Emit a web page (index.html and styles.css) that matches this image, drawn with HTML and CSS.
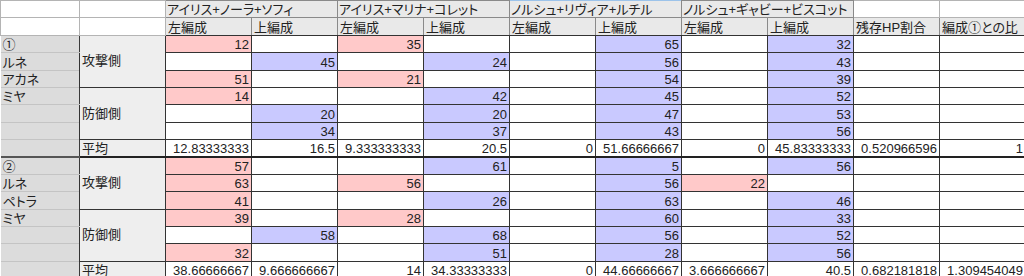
FILE: index.html
```html
<!DOCTYPE html>
<html lang="ja">
<head>
<meta charset="utf-8">
<title>編成比較</title>
<link rel="stylesheet" href="styles.css">
</head>
<body>
<table class="sheet">
  <colgroup>
    <col class="col-a"><col class="col-b">
    <col class="col-n"><col class="col-n"><col class="col-n"><col class="col-n"><col class="col-n">
    <col class="col-n"><col class="col-n"><col class="col-n"><col class="col-n"><col class="col-n">
  </colgroup>
  <tr class="r1">
    <td class="hb"></td><td class="hb"></td>
    <td class="grp" colspan="2">アイリス+ノーラ+ソフィ</td>
    <td class="grp" colspan="2">アイリス+マリナ+コレット</td>
    <td class="grp sel" colspan="2">ノルシュ+リヴィア+ルチル</td>
    <td class="grp" colspan="2">ノルシュ+ギャビー+ビスコット</td>
    <td class="hb"></td><td class="hb"></td>
  </tr>
  <tr class="r2">
    <td class="hb"></td><td class="hb"></td>
    <td class="sub">左編成</td><td class="sub">上編成</td>
    <td class="sub">左編成</td><td class="sub">上編成</td>
    <td class="sub">左編成</td><td class="sub">上編成</td>
    <td class="sub">左編成</td><td class="sub">上編成</td>
    <td class="sub">残存HP割合</td><td class="sub">編成①との比</td>
  </tr>

  <tr>
    <td class="nm">①</td><td class="side" rowspan="3">攻撃側</td>
    <td class="v p">12</td><td class="v"></td><td class="v p">35</td><td class="v"></td><td class="v"></td><td class="v b">65</td><td class="v"></td><td class="v b">32</td><td class="v"></td><td class="v"></td>
  </tr>
  <tr>
    <td class="nm">ルネ</td>
    <td class="v"></td><td class="v b">45</td><td class="v"></td><td class="v b">24</td><td class="v"></td><td class="v b">56</td><td class="v"></td><td class="v b">43</td><td class="v"></td><td class="v"></td>
  </tr>
  <tr>
    <td class="nm">アカネ</td>
    <td class="v p">51</td><td class="v"></td><td class="v p">21</td><td class="v"></td><td class="v"></td><td class="v b">54</td><td class="v"></td><td class="v b">39</td><td class="v"></td><td class="v"></td>
  </tr>
  <tr>
    <td class="nm">ミヤ</td><td class="side" rowspan="3">防御側</td>
    <td class="v p">14</td><td class="v"></td><td class="v"></td><td class="v b">42</td><td class="v"></td><td class="v b">45</td><td class="v"></td><td class="v b">52</td><td class="v"></td><td class="v"></td>
  </tr>
  <tr>
    <td class="nm"></td>
    <td class="v"></td><td class="v b">20</td><td class="v"></td><td class="v b">20</td><td class="v"></td><td class="v b">47</td><td class="v"></td><td class="v b">53</td><td class="v"></td><td class="v"></td>
  </tr>
  <tr>
    <td class="nm"></td>
    <td class="v"></td><td class="v b">34</td><td class="v"></td><td class="v b">37</td><td class="v"></td><td class="v b">43</td><td class="v"></td><td class="v b">56</td><td class="v"></td><td class="v"></td>
  </tr>
  <tr class="avg">
    <td class="nm"></td><td class="side">平均</td>
    <td class="v">12.83333333</td><td class="v">16.5</td><td class="v">9.333333333</td><td class="v">20.5</td><td class="v">0</td><td class="v">51.66666667</td><td class="v">0</td><td class="v">45.83333333</td><td class="v">0.520966596</td><td class="v">1</td>
  </tr>

  <tr>
    <td class="nm">②</td><td class="side" rowspan="3">攻撃側</td>
    <td class="v p">57</td><td class="v"></td><td class="v"></td><td class="v b">61</td><td class="v"></td><td class="v b">5</td><td class="v"></td><td class="v b">56</td><td class="v"></td><td class="v"></td>
  </tr>
  <tr>
    <td class="nm">ルネ</td>
    <td class="v p">63</td><td class="v"></td><td class="v p">56</td><td class="v"></td><td class="v"></td><td class="v b">56</td><td class="v p">22</td><td class="v"></td><td class="v"></td><td class="v"></td>
  </tr>
  <tr>
    <td class="nm">ペトラ</td>
    <td class="v p">41</td><td class="v"></td><td class="v"></td><td class="v b">26</td><td class="v"></td><td class="v b">63</td><td class="v"></td><td class="v b">46</td><td class="v"></td><td class="v"></td>
  </tr>
  <tr>
    <td class="nm">ミヤ</td><td class="side" rowspan="3">防御側</td>
    <td class="v p">39</td><td class="v"></td><td class="v p">28</td><td class="v"></td><td class="v"></td><td class="v b">60</td><td class="v"></td><td class="v b">33</td><td class="v"></td><td class="v"></td>
  </tr>
  <tr>
    <td class="nm"></td>
    <td class="v"></td><td class="v b">58</td><td class="v"></td><td class="v b">68</td><td class="v"></td><td class="v b">56</td><td class="v"></td><td class="v b">52</td><td class="v"></td><td class="v"></td>
  </tr>
  <tr>
    <td class="nm"></td>
    <td class="v p">32</td><td class="v"></td><td class="v"></td><td class="v b">51</td><td class="v"></td><td class="v b">28</td><td class="v"></td><td class="v b">56</td><td class="v"></td><td class="v"></td>
  </tr>
  <tr class="avg">
    <td class="nm"></td><td class="side">平均</td>
    <td class="v">38.66666667</td><td class="v">9.666666667</td><td class="v">14</td><td class="v">34.33333333</td><td class="v">0</td><td class="v">44.66666667</td><td class="v">3.666666667</td><td class="v">40.5</td><td class="v">0.682181818</td><td class="v">1.309454049</td>
  </tr>
</table>
</body>
</html>
```

FILE: styles.css
```css
html, body {
  margin: 0;
  padding: 0;
  background: #ffffff;
  overflow: hidden;
}

.sheet {
  border-collapse: collapse;
  table-layout: fixed;
  width: 1025px;
  font-family: "Liberation Sans", "Noto Sans CJK JP", sans-serif;
  font-size: 13px;
  color: #222222;
  font-feature-settings: "palt";
}

.col-a { width: 79px; }
.col-b { width: 86px; }
.col-n { width: 86px; }

.sheet tr { height: 17.4px; }

.sheet td {
  padding: 0 2px 0 2px;
  line-height: 14px;
  white-space: nowrap;
  overflow: hidden;
  vertical-align: bottom;
}

/* header rows */
.sheet .hb {
  background: #ffffff;
  border: 1px solid #b4b4b4;
}
.sheet .grp {
  background: #e9e9e9;
  border: 1px solid #8a8a8a;
  text-align: left;
  padding-left: 1px;
}
.sheet .grp.sel { border-top-color: #9cc3ea; }
.sheet .sub {
  background: #e9e9e9;
  border: 1px solid #8a8a8a;
  border-bottom-color: #333333;
  text-align: left;
}

/* row labels */
.sheet .nm {
  background: #dcdcdc;
  border-bottom: 1px solid #c4c4c4;
  border-right: 1px solid #3a3a3a;
  text-align: left;
}
.sheet .side {
  background: #eeeeee;
  border: 1px solid #333333;
  text-align: left;
  vertical-align: middle;
  padding-left: 2px;
}
.sheet .avg .side { vertical-align: bottom; }

/* values */
.sheet .v {
  background: #ffffff;
  border: 1px solid #333333;
  text-align: right;
}
.sheet .v.p { background: #ffc9c9; }
.sheet .v.b { background: #c9c9ff; }

.sheet .avg td { border-bottom: 2px solid #222222; }
.sheet .avg .nm { border-bottom: 2px solid #555555; }
```
